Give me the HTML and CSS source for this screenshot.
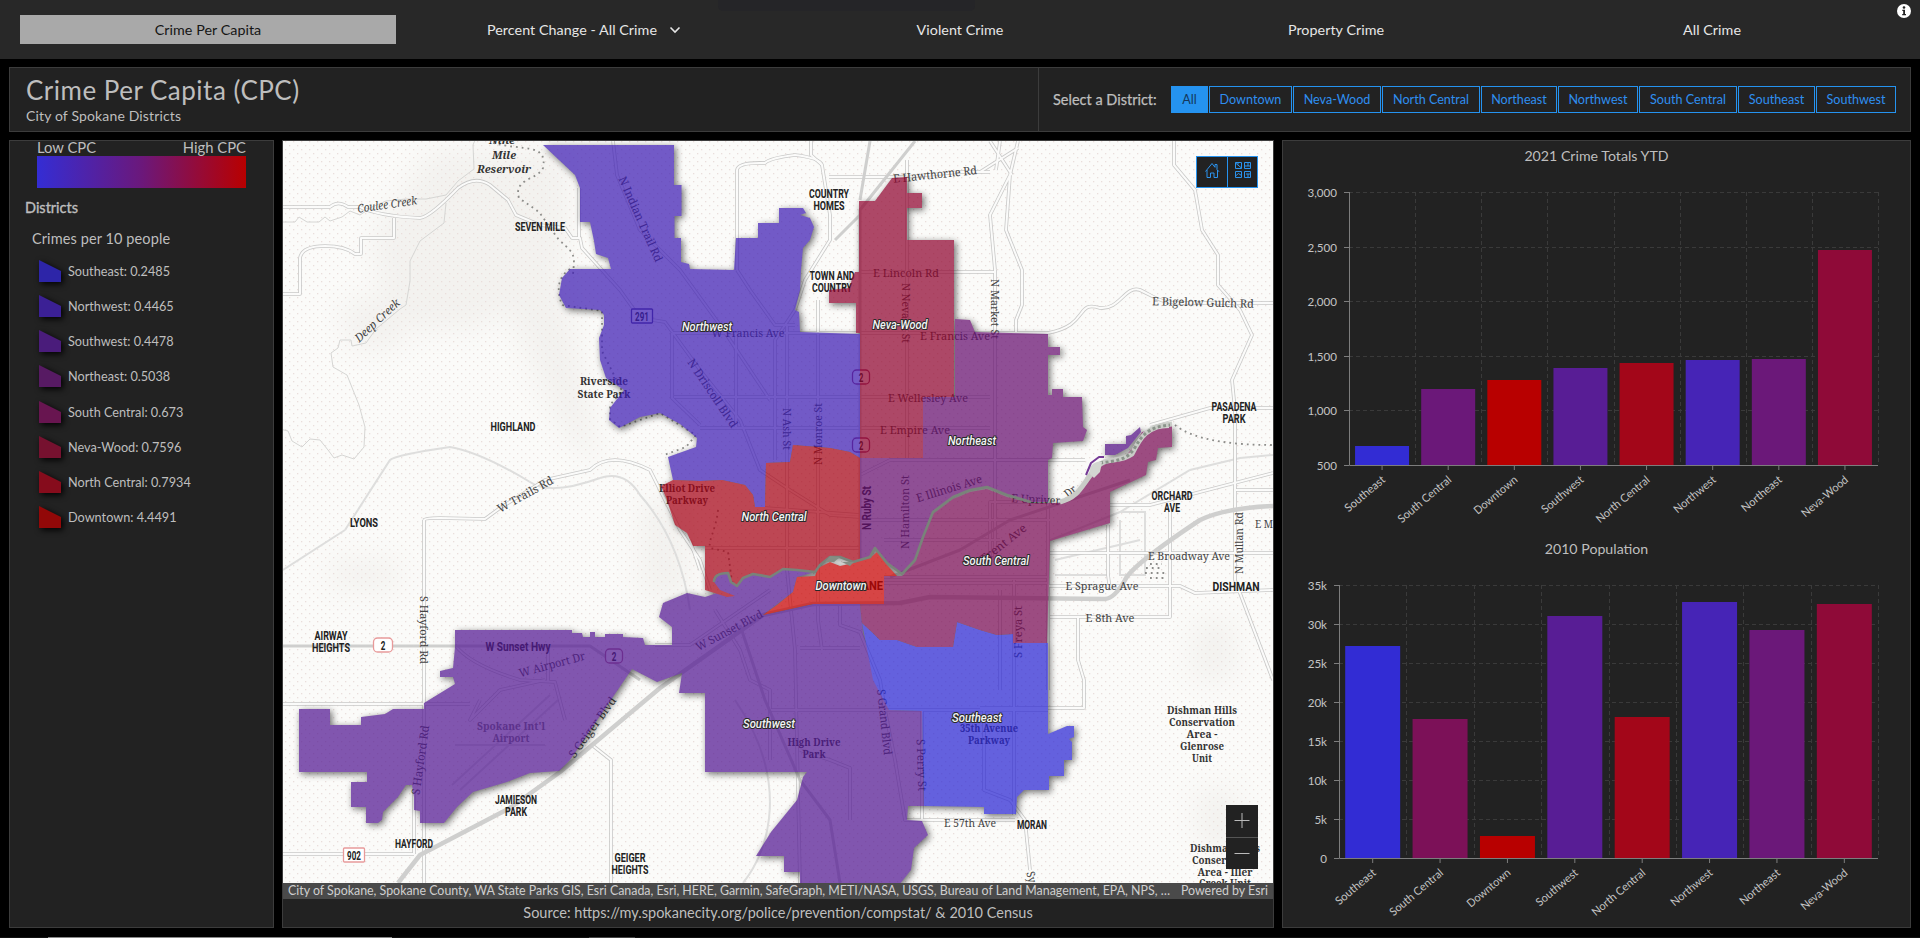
FILE: index.html
```html
<!DOCTYPE html>
<html lang="en">
<head>
<meta charset="utf-8">
<title>Crime Per Capita</title>
<link rel="stylesheet" href="styles.css">
</head>
<body>
<div class="page">
  <nav class="nav">
    <a class="nav-item active">Crime Per Capita</a>
    <a class="nav-item">Percent Change - All Crime
      <svg class="chevron" width="12" height="8" viewBox="0 0 12 8"><path d="M1.5 1.5 6 6 10.500 1.500" fill="none" stroke="currentColor" stroke-width="1.6"/></svg>
    </a>
    <a class="nav-item">Violent Crime</a>
    <a class="nav-item">Property Crime</a>
    <a class="nav-item">All Crime</a>
    <span class="nav-tab"></span>
    <svg class="info" width="14" height="14" viewBox="0 0 14 14"><circle cx="7" cy="7" r="7" fill="#fff"/><circle cx="7" cy="3.500" r="1.300" fill="#222"/><path d="M5.300 5.800H8v4.200h1v1.200H5.200V10h1V7h-.9z" fill="#222"/></svg>
  </nav>
  <header class="head">
    <div class="head-title">
      <h1>Crime Per Capita (CPC)</h1>
      <p>City of Spokane Districts</p>
    </div>
    <div class="selector">
      <span class="selector-label">Select a District:</span>
      <div class="districts">
        <button class="on">All</button><button>Downtown</button><button>Neva-Wood</button><button>North Central</button><button>Northeast</button><button>Northwest</button><button>South Central</button><button>Southeast</button><button>Southwest</button>
      </div>
    </div>
  </header>
  <main class="main">
    <aside class="panel legend">
      <div class="ramp-labels"><span>Low CPC</span><span>High CPC</span></div>
      <div class="ramp"></div>
      <h2>Districts</h2>
      <h3>Crimes per 10 people</h3>
      <ul id="legend"></ul>
    </aside>
    <section class="panel map-panel">
      <div class="map">
        <svg id="map" width="990" height="742" viewBox="283 141 990 742">
          <defs>
            <pattern id="dots" width="8" height="8" patternUnits="userSpaceOnUse"><rect x="1" y="1" width="1.300" height="1.300" fill="#e9dedb"/><rect x="5" y="5" width="1.300" height="1.300" fill="#e9dedb"/></pattern>
            <filter id="soft" x="-50%" y="-50%" width="200%" height="200%"><feGaussianBlur stdDeviation="14"/></filter>
            <filter id="lift" filterUnits="userSpaceOnUse" x="270" y="130" width="1010" height="790" color-interpolation-filters="sRGB"><feDropShadow dx="2" dy="2" stdDeviation="3.500" flood-color="#000" flood-opacity=".8"/></filter>
          </defs>
          <rect x="283" y="141" width="990" height="742" fill="#fbfbf9"/>
          <g fill="#f3f2ef" filter="url(#soft)">
            <path d="M430 150H570V250L480 330 390 330 370 240Z"/><path d="M340 300H400V350H350Z"/><path d="M480 250 560 250 590 400 600 470 560 430Z"/>
            <path d="M330 560H400V590H330Z"/><path d="M640 500H690V600H640Z"/><path d="M1195 620H1235V680H1190Z"/><path d="M1195 790H1240V850H1200Z"/>
          </g>
          <rect x="283" y="141" width="990" height="742" fill="url(#dots)"/>
          <g id="creeks" class="creek">
            <path d="M283 222l12 0 4-5 8 5 12 0 6-5 5 4 12-4 8-6 10 4 12-8 14-6 20-2 20 0 20-4 12-14 16-12-1-24 6-15"/>
            <path d="M446 203l-2 20-24 18-10 20 0 20-4 24-6 4-24 20-10 14-14 3-1-6-11 0-2 8-7 5 2 14 14 8 12 30 6 22-1 20-10 12-12-4-8 3-6-8-8-10-10-1-8 8-10-6-4-10-8-2-2-8-7-3"/>
          </g>
          <g id="roads"></g>
          <g class="dotted">
            <path d="M493 143c30 8 55 0 50 25-5 12-30 10-24 30l20 14 20 28c16 14 16 14 14 34"/>
            <path d="M570 269c-12 8-14 20-8 36l40 6 0 40 20 40-12 14 0 14 10 8 40-14 36 22-10 12-22 8"/>
            <path d="M1175 425c20 16 60 20 98 20"/>
            <path d="M718 510c-2 20-10 30-8 38l18 4 4 30"/>
            <path d="M1146 568h16M1150 564h12M1145 573h20M1150 578h14"/>
          </g>
          <g id="baselabels"></g>
          <g opacity=".72" filter="url(#lift)" id="areas">
            <path fill="#3e1db4" d="M543 145H674V185H681.500V216H674.500V238H681V262L689 264 690 269 734 270 736 238H758V223H779V208H803L806 213 800 215 810 218 814 227 810 240 803 248 801 270 800 290 795 310 799 312 800 332 860 334V458L850 452 830 448 793 445 790 462 766 463 765 507H755L753 495 745 485 722 480 700 481 673 480 668 457 696 447 697 438 680 424 660 413 640 417 625 425 619 428 609 420 610 408 624 390 606 378 600 360 599 338 604 325V315L600 310 566 308 559 295 562 278 570 269H611L608 258 596 254 594 241 590 222H580V188L575 175Z"/>
            <path fill="#660e70" d="M955 319 970 320 975 332 1048 334V347H1060V355H1048V395H1052V389H1063V397H1082L1083 427 1087 430 1083 441 1053 443 1052 458 1048 460V502L1030 502 1007 495 987 487 970 490 953 497 933 512 923 537 915 560 902 574 887 563 875 548 870 557 860 562V458H922V397H955Z"/>
            <path fill="#531893" d="M705 597 687 593 663 603 659 617 672 627V645H645L643 638 623 637V634H605V637H595V632H590V637H583L582 633H572V630H455V647L453 668 440 671V677H453L455 684 424 703V709H393L385 714 361 717V725H330V709H299V772H367V782H351V807H366V823H378L382 820 383 812 390 805 398 797 406 785H412L414 797V810L420 811V823H444L457 807 473 792 507 782 530 773 559 771 570 760 632 669 657 682 682 673 679 693H705V772H807L803 777 797 800 771 832 756 856H784V872H800V885H899L911 870 914 848 928 835 922 821 907 820 908 806H924L922 711 889 710 877 680 863 633 860 604H813L763 615 793 592 797 577 815 572 797 570 783 569 770 577 753 574 743 578 737 586 730 582 728 573 718 575 714 582 720 592Z"/>
            <path fill="#2b26d4" d="M862 623 873 680 889 710 922 711 924 806 984 807V814H1016L1017 797 1024 790H1049V776H1064V760H1072V742L1069 739 1074 737V726H1067L1048 734V643L1013 643V634L997 635 980 630 957 622 953 647H917L897 640H880L873 633Z"/>
            <path fill="#780a54" d="M1048 503 1060 503 1068 500 1090 477 1103 463 1125 457 1135 445 1142 432 1155 429 1169 428V425H1172V447L1158 448 1156 460 1148 462 1146 475 1110 492V523L1050 541 1047 643H1013V634L997 635 980 630 957 622 953 647H917L897 640H880L873 633 862 623 860 604H884V576H897L902 576 915 562 923 539 933 514 953 499 970 492 987 489 1007 497 1030 503Z"/>
            <path fill="#a60216" d="M860 458V562L853 562 840 557 830 557 820 565 815 572 797 570 783 569 770 577 753 574 743 578 737 586 730 582 728 573 718 575 714 582 720 590 735 596 727 597 705 590V546H693L687 533 675 525 667 500 661 486 673 480 700 481 722 480 745 485 753 495 755 507H765L766 463 790 462 793 445 830 448 850 452Z"/>
            <path fill="#90042f" d="M859 201H875L892 178 907 177V193H922V208H907V240H954V397H923V458H860V333H856V303H829V290L850 288 852 278 855 272H859Z"/>
            <path fill="#c80000" d="M763 615 777 605 793 592 797 577 815 576 818 568 830 562 840 566 853 563 870 558 877 552 887 565 897 576H884V604H813Z"/>
            <path fill="#500e84" d="M1105 455V444H1126V436L1131 435 1140 427 1141 432 1128 448 1115 455Z"/>
          </g>
          <g class="river">
            <path d="M714 582c0-8 8-9 14-9l3 9 6 4 6-8 10-4 17 3 13-8 14 1 18 2 5-7 10-8 10 0 13 5 17-5 5-9 12 15 15 11 13-14 8-23 10-25 20-15 17-7 17-3 20 8 24 7"/>
            <path class="wide" d="M1060 502c20-5 22-18 36-34 10-12 22-4 36-14 8-16 14-28 40-30"/>
            <path class="bed" d="M1100 463c14-2 26-2 34-14 8-14 14-22 36-24"/>
            <path class="blob" d="M825 562l5-6 10 1-6 5zM842 562h12l-4 4z"/>
            <path class="blob pale" d="M1090 474c-3-8 7-14 12-12l-2 10-6 6z"/>
            <path class="fringe" d="M1086 475l5-12 8-6 5 0"/>
          </g>
          <g id="districtlabels"></g>
        </svg>
        <div class="tools">
          <svg width="30" height="30" viewBox="0 0 30 30"><path d="M8.500 14.500 15 6.500l3 3.800V7.500h2v5l2 2.200M10 13v7.500h3.500V16h3.500v4.500H20.500V13" fill="none" stroke="#2b93ee"/></svg>
          <svg width="30" height="30" viewBox="0 0 30 30"><g fill="none" stroke="#2b93ee"><path d="M7.500 5.500h6v6h-6zM16.500 5.500h6v6h-6zM7.500 14.500h6v6h-6zM16.500 14.500h6v6h-6z"/><path d="M7.500 6l6 5M10 5.500v2M16.500 9h3.500v-3.500M20 9h2.500M7.500 19l3-2.500 3 2M18 17h4.500M20 17v3"/></g></svg>
        </div>
        <div class="zoom">
          <svg width="32" height="32" viewBox="0 0 32 32"><path d="M16 8v15M8.500 15.500h15" stroke="#bbb"/></svg>
          <svg width="32" height="31" viewBox="0 0 32 31"><path d="M8.500 15.500h15" stroke="#bbb"/></svg>
        </div>
      </div>
      <div class="credits"><span class="credits-main">City of Spokane, Spokane County, WA State Parks GIS, Esri Canada, Esri, HERE, Garmin, SafeGraph, METI/NASA, USGS, Bureau of Land Management, EPA, NPS, …</span><span class="credits-esri">Powered by Esri</span></div>
      <div class="source">Source: https://my.spokanecity.org/police/prevention/compstat/ &amp; 2010 Census</div>
    </section>
    <section class="panel charts">
      <h2 class="chart-title">2021 Crime Totals YTD</h2>
      <svg id="chart-crime" width="627" height="350" viewBox="1283 172 627 350"></svg>
      <h2 class="chart-title">2010 Population</h2>
      <svg id="chart-pop" width="627" height="350" viewBox="1283 565 627 350"></svg>
    </section>
  </main>
  <div class="taskbar"><span></span><i></i></div>
</div>
<script src="script.js"></script>
</body>
</html>
```
FILE: styles.css
```css
* { box-sizing: border-box; }
body { margin: 0; background: #000; color: #bebebe; font-family: Lato, "Open Sans", sans-serif; }
h1, h2, h3, p, ul { margin: 0; padding: 0; font-weight: 400; }
.page { width: 1920px; height: 938px; display: flex; flex-direction: column; overflow: hidden; }
.nav { position: relative; height: 59px; background: #282828; display: flex; padding: 15px 20px; flex: none; }
.nav-item { flex: 1; height: 29px; display: flex; align-items: center; justify-content: center; font-size: 14.300px; letter-spacing: .05px; color: #e6e6e6; }
.nav-item.active { background: #a9a9a9; color: #151515; }
.chevron { margin-left: 12px; }
.nav-tab { position: absolute; left: 718px; top: 0; width: 257px; height: 11px; background: #252528; border-radius: 0 0 5px 5px; }
.info { position: absolute; left: 1897px; top: 4px; }
.head { margin: 8px 9px 0; height: 65px; flex: none; display: flex; background: #222; border: 1px solid #3c3c3c; }
.head-title { width: 1029px; border-right: 1px solid #3c3c3c; padding: 6px 0 0 16px; }
.head-title h1 { font-size: 26px; line-height: 32px; letter-spacing: .5px; }
.head-title p { font-size: 14px; line-height: 19px; letter-spacing: .15px; }
.selector { flex: 1; display: flex; align-items: center; padding: 0 14px 1px 14px; justify-content: space-between; }
.selector-label { font-size: 14.500px; -webkit-text-stroke: .25px; }
.districts { display: grid; grid-template-columns: 37px 83px 88px 98px 76px 80px 98px 77px 80px; column-gap: 1px; }
.districts button { height: 27px; padding: 0; border: 1px solid #2593f0; background: #222; color: #2f8ff0; font: 12.600px Lato, sans-serif; white-space: nowrap; }
.districts button.on { background: #2593f0; color: #14375c; }
.main { display: flex; height: 788px; margin: 8px 9px 0; gap: 8px; flex: none; }
.panel { background: #222; border: 1px solid #3c3c3c; }
.legend { width: 265px; }
.ramp-labels { display: flex; justify-content: space-between; margin: 0 27px; height: 15px; font-size: 14.800px; line-height: 12px; }
.ramp { margin: 0 27px; height: 32px; background: linear-gradient(90deg, #342dd4, #6b187b 50%, #b80000); }
.legend h2 { font-size: 14.500px; margin: 11px 0 0 15px; line-height: 17px; -webkit-text-stroke: .35px; }
.legend h3 { font-size: 14.500px; margin: 14px 0 0 22px; line-height: 18px; letter-spacing: .1px; }
.legend ul { list-style: none; margin: 5px 0 0 27px; }
.legend li { display: flex; align-items: center; height: 35.250px; font-size: 12.700px; }
.legend li svg { margin-right: 5px; overflow: visible; filter: drop-shadow(2px 2px 3px #000); }
.map-panel { width: 992px; }
.map { position: relative; height: 742px; }
.map > svg { display: block; }
.creek path { fill: none; stroke: #d6d6d4; stroke-width: 1; }
.road { fill: none; stroke: #c9c9c8; stroke-width: 3.600; stroke-linejoin: round; }
.road-in { fill: none; stroke: #fbfbfa; stroke-width: 2; stroke-linejoin: round; }
.hwy { fill: none; stroke: #cfcfce; stroke-width: 4.500; stroke-linejoin: round; }
.minor { fill: none; stroke: #dededd; stroke-width: 2; }
.dotted path { fill: none; stroke: #8d8d8a; stroke-width: 1.800; stroke-dasharray: 1.800 4; }
.river path { fill: none; stroke: #79837a; stroke-width: 2.600; stroke-linejoin: round; }
.river .wide { stroke: #c9ccc7; stroke-width: 5; }
.river .bed { stroke: #8a938a; stroke-width: 3; stroke-dasharray: 3 2.500; }
.river .blob { fill: #858d84; stroke: none; }
.river .pale { fill: #d3d6d1; }
.river .fringe { stroke: #753a96; stroke-width: 2; }
.ser { font-family: "Noto Serif", "Liberation Serif", serif; fill: #444; font-size: 11.500px; }
.park { font-family: "Noto Serif", "Liberation Serif", serif; font-weight: 700; fill: #333; font-size: 11.500px; }
.faint { fill: #777; }
.it { font-style: italic; }
.town { font-family: Roboto, sans-serif; font-weight: 700; fill: #222; font-size: 12.500px; }
.dist { font-family: Roboto, sans-serif; font-weight: 500; font-style: italic; fill: #f4f4f4; font-size: 13px; stroke: #2a2a2a; stroke-width: 2.200px; paint-order: stroke; stroke-linejoin: round; }
.tools { position: absolute; left: 913px; top: 15px; display: flex; border: 1px solid #2593f0; background: #222; }
.tools svg { display: block; }
.tools svg + svg { border-left: 1px solid #2593f0; box-sizing: content-box; margin-right: -1px; }
.zoom { position: absolute; left: 943px; top: 664px; width: 32px; background: #222; }
.zoom svg { display: block; }
.zoom svg + svg { border-top: 1px solid #555; box-sizing: content-box; }
.credits { height: 16px; background: #4a4a4a; color: #cfcfcf; display: flex; justify-content: space-between; padding: 0 5px; font-size: 12.400px; line-height: 16px; white-space: nowrap; }
.source { height: 28px; line-height: 27px; text-align: center; font-size: 14.500px; }
.charts { width: 629px; }
.chart-title { font-size: 14.200px; text-align: center; line-height: 29px; height: 31px; }
.charts svg { display: block; overflow: visible; }
.charts svg + .chart-title { height: 43px; line-height: 54px; }
.axis { stroke: #7d7d7d; stroke-width: 1; }
.grid { stroke: #3a3a3a; stroke-width: 1; stroke-dasharray: 4 3; }
.tick { font-size: 11.600px; fill: #c4c4c4; font-family: Lato, sans-serif; }
.cat { font-size: 11.300px; }
.taskbar { margin-top: auto; height: 1px; display: flex; background: #111; }
.taskbar span { margin-left: 48px; width: 344px; background: #888; }
.taskbar i { margin-left: 197px; width: 46px; background: #444; }
```
FILE: script.js
```js
const NS = 'http://www.w3.org/2000/svg';
function el(parent, tag, attrs, text) {
  const n = document.createElementNS(NS, tag);
  for (const k in attrs) n.setAttribute(k, attrs[k]);
  if (text !== undefined) n.textContent = text;
  parent.appendChild(n);
  return n;
}

// Legend
[['Southeast: 0.2485', '#2d25a8'], ['Northwest: 0.4465', '#3b2095'], ['Southwest: 0.4478', '#4a1c7b'], ['Northeast: 0.5038', '#571a63'],
 ['South Central: 0.673', '#681550'], ['Neva-Wood: 0.7596', '#76112f'], ['North Central: 0.7934', '#860c1c'], ['Downtown: 4.4491', '#920808']]
.forEach(([t, c]) => {
  const li = document.createElement('li');
  const s = el(li, 'svg', { width: 26, height: 24, viewBox: '0 0 26 24' });
  el(s, 'path', { d: 'M2 1 24 12V23H2Z', fill: c });
  li.appendChild(document.createTextNode(t));
  document.getElementById('legend').appendChild(li);
});

// Roads
const roads = document.getElementById('roads');
['M345 530 390 460Q395 455 450 447 480 452 530 482 550 496 600 478', 'M283 570 345 530', 'M600 478Q625 470 640 495 680 540 690 610',
 'M1048 541 1120 512 1190 470 1240 458 1273 455', 'M1055 560 1140 540', 'M1055 575H1110M1120 520V575H1145V512H1120', 'M743 883C770 850 790 780 735 700', 'M455 745H545M452 785 550 695M460 790 558 700']
.forEach(d => el(roads, 'path', { class: 'minor', d }));
const doubles = ['M283 207H330Q338 200 348 207H360Q378 216 420 218 430 217 458 188 475 175 490 185L508 200 516 215 540 225 565 228 572 238H580L582 248 620 290 640 318 665 322 700 370 740 420 760 470 790 490 830 515 860 517',
 'M283 294H300V258Q302 246 325 246 345 246 355 254H361V238H394V218', 'M579 238V188', 'M613 141 617 175 640 230 680 270 720 325 770 400',
 'M424 520V883M424 520Q425 518 440 518L485 519 500 508 545 480 590 470Q610 450 650 470L660 490 680 530 700 560 710 590', 'M283 854H414M414 790V854',
 'M737 270V170Q738 162 765 163 770 158 795 155 820 158 822 165L830 215 830 240 805 280 795 310 775 340V460',
 'M811 141V155L822 165', 'M829 177H905L960 172 990 172', 'M907 160V458M860 272H995M672 333H1048M672 333V398L700 425M674 397H990M700 428H990M737 270 750 290 775 325H795M736 333V428M787 325V570L795 650 800 883',
 'M818 300V620L822 650M995 270V560M996 170 1000 141M1018 141 1010 175 990 215 995 270M1010 175 1006 230 1022 270 1022 305 1016 320V333M990 141 1012 175M980 172 1018 148',
 'M1048 333C1090 325 1075 300 1100 308 1120 310 1125 285 1140 290 1155 297 1160 303 1180 303H1273', 'M1174 141V165L1195 190 1202 230 1218 255 1218 285 1240 310 1252 335 1232 380 1235 410V580L1273 680',
 'M1048 460H890L860 475', 'M1048 460H1085M1048 502V690M940 460H1048', 'M1150 425 1210 408H1273', 'M1108 525V575L1110 590M1050 553H1273M1170 510V617H1050M1048 586H1180L1195 593 1273 590M1078 617V660L1084 680V708H980M1048 502H990V560M1110 505H1150L1273 473M1235 490H1273',
 'M705 548H860M765 508 860 515M860 520H1050M884 540H1000M800 648H860M840 604V625L860 632 880 680 885 710 895 760 905 820H1015M922 711V820M770 710H1048M1014 580V815M1000 590V690M984 710V790L1010 800 1025 820 1030 870',
 'M611 795V883M592 745 611 760V883M283 704H470M455 645Q470 665 520 680L555 682 565 720M480 700 470 720 500 690 545 680M548 650V682', 'M884 577H1048M884 583H1048M700 570 690 540', 'M800 750 830 760 850 768V820',
 'M655 645 690 645 770 590M715 610 740 650 750 680 770 690V760'];
doubles.forEach(d => el(roads, 'path', { class: 'road', d }));
doubles.forEach(d => el(roads, 'path', { class: 'road-in', d }));
['M398 883 420 855 510 808 560 772 660 688 763 615 813 604 900 603 930 597 1105 599Q1115 598 1125 580 1132 565 1200 520 1225 508 1273 506', 'M283 646H590L640 680', 'M915 141 860 210V560M870 141 860 200', 'M740 625 765 700 800 780 830 820 840 883', 'M890 577 960 550 1010 520 1130 480', 'M860 215 835 240']
.forEach((d, i) => el(roads, 'path', { class: 'hwy', d, style: i ? 'stroke-width:3' : '' }));

// Place and street names: text, x, y, width, rotation, class
const base = document.getElementById('baselabels');
function label(p, [t, x, y, len, rot, cls]) {
  el(p, 'text', { class: cls, 'text-anchor': 'middle', 'dominant-baseline': 'central', textLength: len, lengthAdjust: 'spacingAndGlyphs', transform: `translate(${x} ${y}) rotate(${rot || 0})` }, t);
}
[['Nine', 502, 139, 26, 0, 'park it'], ['Mile', 504, 154, 24, 0, 'park it'], ['Reservoir', 504, 168, 54, 0, 'park it'],
 ['Coulee Creek', 387, 204, 60, -8, 'ser it'], ['Deep Creek', 377, 320, 57, -43, 'ser it'],
 ['SEVEN MILE', 540, 226, 50, 0, 'town'], ['HIGHLAND', 513, 426, 45, 0, 'town'], ['LYONS', 364, 522, 28, 0, 'town'], ['W Trails Rd', 525, 494, 62, -29, 'ser'],
 ['Riverside', 604, 380, 48, 0, 'park'], ['State Park', 604, 393, 53, 0, 'park'], ['COUNTRY', 829, 193, 40, 0, 'town'], ['HOMES', 829, 205, 31, 0, 'town'],
 ['TOWN AND', 832, 275, 45, 0, 'town'], ['COUNTRY', 832, 287, 40, 0, 'town'], ['E Hawthorne Rd', 935, 174, 84, -6, 'ser'], ['E Lincoln Rd', 906, 272, 66, 0, 'ser'],
 ['N Nevada St', 906, 313, 60, 90, 'ser'], ['E Francis Ave', 955, 335, 70, 0, 'ser'], ['W Francis Ave', 748, 332, 73, 0, 'ser'],
 ['N Indian Trail Rd', 641, 219, 92, 66, 'ser'], ['N Driscoll Blvd', 713, 393, 80, 56, 'ser'], ['N Ash St', 787, 429, 42, 90, 'ser'], ['N Monroe St', 817, 434, 62, -90, 'ser'],
 ['E Wellesley Ave', 928, 397, 80, 0, 'ser'], ['E Empire Ave', 915, 429, 70, 0, 'ser'], ['N Ruby St', 866, 508, 44, -90, 'town'], ['N Hamilton St', 904, 512, 74, -90, 'ser'],
 ['N Market St', 995, 309, 60, 90, 'ser'], ['E Bigelow Gulch Rd', 1203, 302, 102, 1.5, 'ser'], ['PASADENA', 1234, 406, 45, 0, 'town'], ['PARK', 1234, 418, 23, 0, 'town'],
 ['ORCHARD', 1172, 495, 41, 0, 'town'], ['AVE', 1172, 507, 16, 0, 'town'], ['E Illinois Ave', 949, 488, 68, -17, 'ser'], ['E Upriver', 1036, 499, 49, 3, 'ser'], ['Dr', 1070, 491, 12, -38, 'ser'],
 ['Trent Ave', 1003, 543, 55, -38, 'ser'], ['E Broadway Ave', 1189, 555, 82, 0, 'ser'], ['N Mullan Rd', 1238, 543, 62, -90, 'ser'], ['E M', 1264, 523, 18, 0, 'ser'],
 ['E Sprague Ave', 1102, 585, 73, 0, 'ser'], ['DISHMAN', 1236, 586, 47, 0, 'town'], ['E 8th Ave', 1110, 617, 49, 0, 'ser'], ['S Freya St', 1017, 632, 52, -90, 'ser'],
 ['SPOKANE', 858, 585, 50, 0, 'town'], ['W Sunset Blvd', 729, 630, 74, -28, 'ser'], ['AIRWAY', 331, 635, 33, 0, 'town'], ['HEIGHTS', 331, 647, 38, 0, 'town'],
 ['S Hayford Rd', 424, 630, 68, 90, 'ser'], ['W Sunset Hwy', 518, 646, 65, 0, 'town'], ['W Airport Dr', 552, 664, 68, -15, 'ser'],
 ["Spokane Int'l", 511, 725, 68, 0, 'park faint'], ['Airport', 511, 737, 37, 0, 'park faint'], ['S Geiger Blvd', 592, 727, 72, -54, 'ser'], ['S Hayford Rd', 420, 760, 70, -82, 'ser'],
 ['JAMIESON', 516, 799, 42, 0, 'town'], ['PARK', 516, 811, 22, 0, 'town'], ['HAYFORD', 414, 843, 38, 0, 'town'], ['GEIGER', 630, 857, 31, 0, 'town'], ['HEIGHTS', 630, 869, 37, 0, 'town'],
 ['High Drive', 814, 741, 53, 0, 'park'], ['Park', 814, 753, 23, 0, 'park'], ['S Grand Blvd', 885, 722, 66, 84, 'ser'], ['S Perry St', 922, 765, 52, 88, 'ser'],
 ['35th Avenue', 989, 727, 58, 0, 'park'], ['Parkway', 989, 739, 42, 0, 'park'], ['E 57th Ave', 970, 822, 52, 0, 'ser'], ['MORAN', 1032, 824, 30, 0, 'town'],
 ['Dishman Hills', 1202, 709, 70, 0, 'park'], ['Conservation', 1202, 721, 66, 0, 'park'], ['Area -', 1202, 733, 31, 0, 'park'], ['Glenrose', 1202, 745, 44, 0, 'park'], ['Unit', 1202, 757, 20, 0, 'park'],
 ['Dishman Hills', 1225, 847, 70, 0, 'park'], ['Conservation', 1225, 859, 66, 0, 'park'], ['Area - Iller', 1225, 871, 55, 0, 'park'], ['Creek Unit', 1225, 882, 52, 0, 'park'],
 ['Elliot Drive', 687, 487, 56, 0, 'park'], ['Parkway', 687, 499, 42, 0, 'park'], ['Sy', 1032, 877, 11, 75, 'ser']]
.forEach(l => label(base, l));
[['291', 642, 316, 21, '#4a3a90'], ['2', 861, 377, 17, '#9a3a6a'], ['2', 861, 445, 17, '#9a3a6a'], ['2', 383, 645, 19, '#e89a9a'], ['2', 614, 656, 17, '#b06a8a'], ['902', 354, 855, 21, '#e89a9a']]
.forEach(([t, x, y, w, c]) => {
  el(base, 'rect', { x: x - w / 2, y: y - 7, width: w, height: 14, rx: t === '2' ? 4 : 1, fill: '#fff', stroke: c, 'stroke-width': 1.3 });
  label(base, [t, x, y + .5, t.length * 4.6, 0, 'town']);
});
const dl = document.getElementById('districtlabels');
[['Northwest', 707, 326, 50], ['Neva-Wood', 900, 324, 55], ['Northeast', 972, 440, 48], ['North Central', 774, 516, 65], ['South Central', 996, 560, 66], ['Downtown', 841, 585, 51], ['Southeast', 977, 717, 50], ['Southwest', 769, 723, 52]]
.forEach(([t, x, y, w]) => label(dl, [t, x, y, w, 0, 'dist']));

// Bar charts
function chart(id, o) {
  const s = document.getElementById(id), pitch = (o.right - o.left) / 8;
  o.ticks.forEach((t, i) => {
    const y = Math.round(o.bottom - i * (o.bottom - o.top) / (o.ticks.length - 1)) + .5;
    if (i) el(s, 'path', { class: 'grid', d: `M${o.left} ${y}H${o.right}` });
    el(s, 'path', { class: 'axis', d: `M${o.left - 5} ${y}h5` });
    el(s, 'text', { class: 'tick', x: o.left - 12, y: y + 4.5, 'text-anchor': 'end' }, t);
  });
  o.names.forEach((n, i) => {
    const x = o.left + pitch * i, cx = x + pitch / 2, gx = Math.round(x + pitch) + .5;
    el(s, 'path', { class: 'grid', d: `M${gx} ${o.top}V${o.bottom}` });
    el(s, 'rect', { x: cx - o.bar / 2, y: o.tops[i], width: o.bar, height: o.bottom - o.tops[i], fill: o.colors[i] });
    el(s, 'path', { class: 'axis', d: `M${cx} ${o.bottom}v5` });
    el(s, 'text', { class: 'tick cat', 'text-anchor': 'end', textLength: o.lens[i], lengthAdjust: 'spacingAndGlyphs', transform: `translate(${cx + 4} ${o.bottom + 16}) rotate(-40)` }, n);
  });
  el(s, 'path', { class: 'axis', fill: 'none', d: `M${o.left + .5} ${o.top}V${o.bottom + .5}H${o.right}` });
}
const names = ['Southeast', 'South Central', 'Downtown', 'Southwest', 'North Central', 'Northwest', 'Northeast', 'Neva-Wood'];
const lens = [49, 66, 53, 51, 66, 51, 49, 57];
chart('chart-crime', { left: 1349, right: 1878, top: 192, bottom: 465, bar: 54, names, lens, ticks: ['500', '1,000', '1,500', '2,000', '2,500', '3,000'],
  tops: [446, 389, 380, 368, 363, 360, 359, 250], colors: ['#322cd4', '#6b1879', '#b80000', '#581d95', '#a30619', '#4624b6', '#6b1879', '#8f0a38'] });
chart('chart-pop', { left: 1339, right: 1878, top: 585, bottom: 858, bar: 55, names, lens, ticks: ['0', '5k', '10k', '15k', '20k', '25k', '30k', '35k'],
  tops: [646, 719, 836, 616, 717, 602, 630, 604], colors: ['#322cd4', '#7c1158', '#b80000', '#581d95', '#a30619', '#4624b6', '#6b1879', '#8f0a38'] });
```
